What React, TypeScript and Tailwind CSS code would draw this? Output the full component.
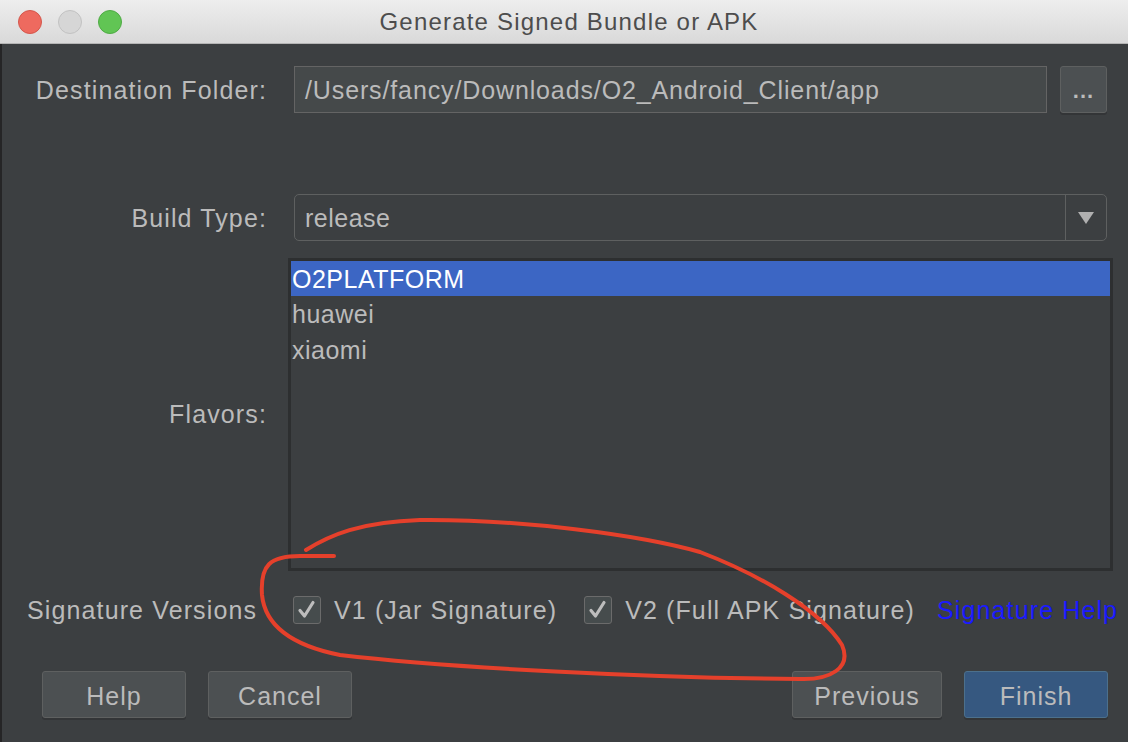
import React from "react";

const font = { fontFamily: '"Liberation Sans", Arial, sans-serif' };

function Check() {
  return (
    <div className="w-[28px] h-[28px] rounded-[3px] border border-[#6b6b6b] bg-[#464c4d] flex items-center justify-center">
      <svg width="22" height="22" viewBox="0 0 22 22">
        <path d="M4 11.5 L8.5 17 L17 3.5" stroke="#bdbdbd" strokeWidth="3.2" fill="none" strokeLinecap="round" strokeLinejoin="round" />
      </svg>
    </div>
  );
}

function Btn({ label, primary }: { label: string; primary?: boolean }) {
  return (
    <div
      className={
        "h-[47px] rounded-[3px] border flex items-center justify-center pt-[4px] text-[25px] tracking-[0.04em] shadow-[0_2px_0_#333537] " +
        (primary
          ? "bg-[#365880] border-[#4c708c] text-[#bbbbbb]"
          : "bg-[#4c5052] border-[#5e6060] text-[#bbbbbb]")
      }
    >
      {label}
    </div>
  );
}

export default function App() {
  return (
    <div className="w-[1128px] h-[742px] overflow-hidden relative flex flex-col" style={font}>
      {/* title bar */}
      <div className="h-[44px] shrink-0 bg-gradient-to-b from-[#eeeeee] to-[#d9d9d9] border-b border-[#b5b5b5] flex items-center relative">
        <div className="flex items-center gap-[16px] pl-[18px]">
          <div className="w-[24px] h-[24px] rounded-full bg-[#ee6a5f] border border-[#d4574c]" />
          <div className="w-[24px] h-[24px] rounded-full bg-[#d6d6d6] border border-[#c2c2c2]" />
          <div className="w-[24px] h-[24px] rounded-full bg-[#61c554] border border-[#4fab45]" />
        </div>
        <div className="absolute inset-0 flex items-center justify-center text-[24px] tracking-[0.05em] text-[#4d4d4d] pl-[10px]">
          Generate Signed Bundle or APK
        </div>
      </div>

      {/* body */}
      <div className="flex-1 bg-[#3c3f41] border-l-[2px] border-[#252526] flex flex-col text-[#bbbbbb] text-[25px] tracking-[0.045em]">
        <div className="grid grid-cols-[265px_813px] gap-x-[27px] mt-[22px]">
          <div className="flex items-center justify-end h-[47px] pt-[3px]">Destination Folder:</div>
          <div className="flex gap-[13px]">
            <div className="flex-1 h-[47px] bg-[#45494a] border border-[#646464] flex items-center pl-[10px] pt-[3px] text-[#bbbbbb] tracking-[0.035em]">
              /Users/fancy/Downloads/O2_Android_Client/app
            </div>
            <div className="w-[47px] h-[47px] rounded-[3px] bg-[#4c5052] border border-[#5e6060] flex items-center justify-center shadow-[0_2px_0_#333537] text-[22px] font-bold pt-[2px]">
              ...
            </div>
          </div>

          <div className="flex items-center justify-end h-[47px] mt-[81px] pt-[3px]">Build Type:</div>
          <div className="h-[47px] mt-[81px] rounded-[5px] border border-[#5e6060] flex">
            <div className="flex-1 flex items-center pl-[10px] pt-[3px] tracking-[0.02em]">release</div>
            <div className="w-[41px] border-l border-[#5e6060] flex items-center justify-center">
              <svg width="16" height="14" viewBox="0 0 16 14">
                <path d="M0 1 H16 L8 13 Z" fill="#b0b0b0" />
              </svg>
            </div>
          </div>

          <div className="flex items-center justify-end mt-[17px]">Flavors:</div>
          <div className="mt-[17px] -mx-[6px] h-[313px] border-[3px] border-[#2d2f30] bg-[#3c3f41] flex flex-col">
            <div className="h-[35px] bg-[#3c66c4] text-white flex items-center pl-[1px] pt-[2px] tracking-[0.02em]">O2PLATFORM</div>
            <div className="h-[36px] flex items-center pl-[1px] pt-[2px] tracking-[0.02em]">huawei</div>
            <div className="h-[36px] flex items-center pl-[1px] pt-[2px] tracking-[0.02em]">xiaomi</div>
          </div>
        </div>

        <div className="flex items-center h-[28px] mt-[25px]">
          <div className="pl-[25px] w-[291px] pt-[2px]">Signature Versions</div>
          <Check />
          <div className="ml-[13px] pt-[2px]">V1 (Jar Signature)</div>
          <div className="ml-[27px]"><Check /></div>
          <div className="ml-[13px] pt-[2px]">V2 (Full APK Signature)</div>
          <div className="ml-[22px] pt-[2px] text-[#1a1aff] tracking-[0.045em]">Signature Help</div>
        </div>

        <div className="flex mt-[47px] px-[40px] pr-[20px]">
          <div className="w-[144px]"><Btn label="Help" /></div>
          <div className="w-[144px] ml-[22px]"><Btn label="Cancel" /></div>
          <div className="flex-1" />
          <div className="w-[150px]"><Btn label="Previous" /></div>
          <div className="w-[144px] ml-[22px]"><Btn label="Finish" primary /></div>
        </div>
      </div>

      {/* red annotation */}
      <svg className="absolute inset-0 pointer-events-none" width="1128" height="742">
        <path
          d="M306 550 C330 535 360 522 420 520 C520 519 640 535 700 552 C760 575 820 610 842 645 C852 668 830 680 800 679 C650 678 450 668 340 655 C290 645 265 625 262 595 C260 565 270 556 300 556 L334 556"
          stroke="#e5402b"
          strokeWidth="4"
          fill="none"
          strokeLinecap="round"
          strokeLinejoin="round"
        />
      </svg>
    </div>
  );
}
